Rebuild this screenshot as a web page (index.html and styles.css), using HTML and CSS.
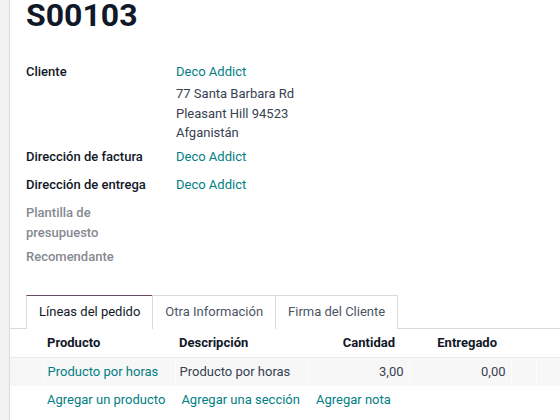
FILE: index.html
```html
<!doctype html>
<html>
<head>
    <meta charset="UTF-8">
    <title>S00103</title>
    <link rel="stylesheet" href="styles.css">
</head>
<body>
<div class="sheet">
    <h1 class="title">S00103</h1>

    <div class="group">
        <div class="row">
            <div class="label">Cliente</div>
            <div class="value customer">
                <a class="link name">Deco Addict</a>
                <div class="address">
                    <div>77 Santa Barbara Rd</div>
                    <div>Pleasant Hill 94523</div>
                    <div>Afganistán</div>
                </div>
            </div>
        </div>
        <div class="row">
            <div class="label">Dirección de factura</div>
            <div class="value"><a class="link">Deco Addict</a></div>
        </div>
        <div class="row">
            <div class="label">Dirección de entrega</div>
            <div class="value"><a class="link">Deco Addict</a></div>
        </div>
        <div class="row">
            <div class="label empty">Plantilla de presupuesto</div>
            <div class="value"></div>
        </div>
        <div class="row">
            <div class="label empty">Recomendante</div>
            <div class="value"></div>
        </div>
    </div>

    <div class="tabs">
        <div class="tab active">Líneas del pedido</div>
        <div class="tab">Otra Información</div>
        <div class="tab">Firma del Cliente</div>
    </div>

    <table class="lines">
        <colgroup>
            <col class="col-handle">
            <col class="col-text">
            <col class="col-text">
            <col class="col-num">
            <col class="col-num">
            <col class="col-small">
            <col>
        </colgroup>
        <thead>
            <tr>
                <th></th>
                <th>Producto</th>
                <th>Descripción</th>
                <th class="num">Cantidad</th>
                <th class="num">Entregado</th>
                <th></th>
                <th></th>
            </tr>
        </thead>
        <tbody>
            <tr class="line">
                <td></td>
                <td><a class="link">Producto por horas</a></td>
                <td>Producto por horas</td>
                <td class="num">3,00</td>
                <td class="num">0,00</td>
                <td></td>
                <td></td>
            </tr>
            <tr class="add">
                <td></td>
                <td colspan="6">
                    <div class="add-links">
                        <a class="link">Agregar un producto</a>
                        <a class="link">Agregar una sección</a>
                        <a class="link">Agregar nota</a>
                    </div>
                </td>
            </tr>
        </tbody>
    </table>
</div>
</body>
</html>
```

FILE: styles.css
```css
html, body {
    margin: 0;
    overflow: hidden;
}
body {
    background-color: #f1f2f4;
    font-family: Roboto, "Noto Sans", sans-serif;
    font-size: 13px;
    line-height: 20px;
    color: #374151;
}
.sheet {
    margin-left: 9px;
    border-left: 1px solid #d8dadd;
    background-color: #fff;
    min-height: 420px;
    padding-left: 16px;
}
.title {
    margin: 0;
    padding-top: 1px;
    font-size: 32px;
    line-height: 29px;
    font-weight: 700;
    color: #111827;
}
.link {
    color: #017e84;
    text-decoration: none;
}

/* form rows */
.group {
    margin-top: 28px;
}
.row {
    display: grid;
    grid-template-columns: 150px 1fr;
}
.label {
    padding-top: 4px;
    padding-right: 16px;
    font-weight: 500;
    color: #111827;
}
.label.empty {
    color: #858991;
}
.value {
    padding: 4px 0;
    min-height: 20px;
}
.value.customer {
    padding-bottom: 0;
}
.customer .name {
    display: block;
    padding-bottom: 2px;
}
.address {
    line-height: 19.5px;
}

/* notebook */
.tabs {
    display: flex;
    margin-top: 24px;
    margin-left: -16px;
    padding-left: 16px;
    border-bottom: 1px solid #d8dadd;
}
.tab {
    padding: 6px 12px;
    border: 1px solid #d8dadd;
    border-bottom: none;
    margin-left: -1px;
    margin-bottom: -1px;
    color: #4b5563;
    background-color: #fff;
}
.tab:first-child {
    margin-left: 0;
}
.tab.active {
    border-top-color: #6b4a63;
    color: #111827;
    padding-bottom: 7px;
}

/* order lines */
.lines {
    margin-left: -16px;
    width: calc(100% + 16px);
    table-layout: fixed;
    border-collapse: collapse;
}
.col-handle {
    width: 33px;
}
.col-text {
    width: 132px;
}
.col-num {
    width: 102px;
}
.col-small {
    width: 25px;
}
.lines th, .lines td {
    padding: 4px;
    text-align: left;
    white-space: nowrap;
    overflow: hidden;
}
.lines th {
    font-weight: 700;
    color: #111827;
    border-bottom: 1px solid #e9eaed;
    box-shadow: 0 1px 2px rgba(0, 0, 0, .04);
}
.lines th.num {
    text-align: right;
    padding-right: 14px;
}
.lines td.num {
    text-align: right;
    padding-right: 5px;
}
.line td {
    background-color: #f7f7f8;
    border-left: 1px solid #fcfcfc;
}
.line td:first-child {
    border-left: none;
}
.add-links {
    display: flex;
    gap: 16px;
}
```
